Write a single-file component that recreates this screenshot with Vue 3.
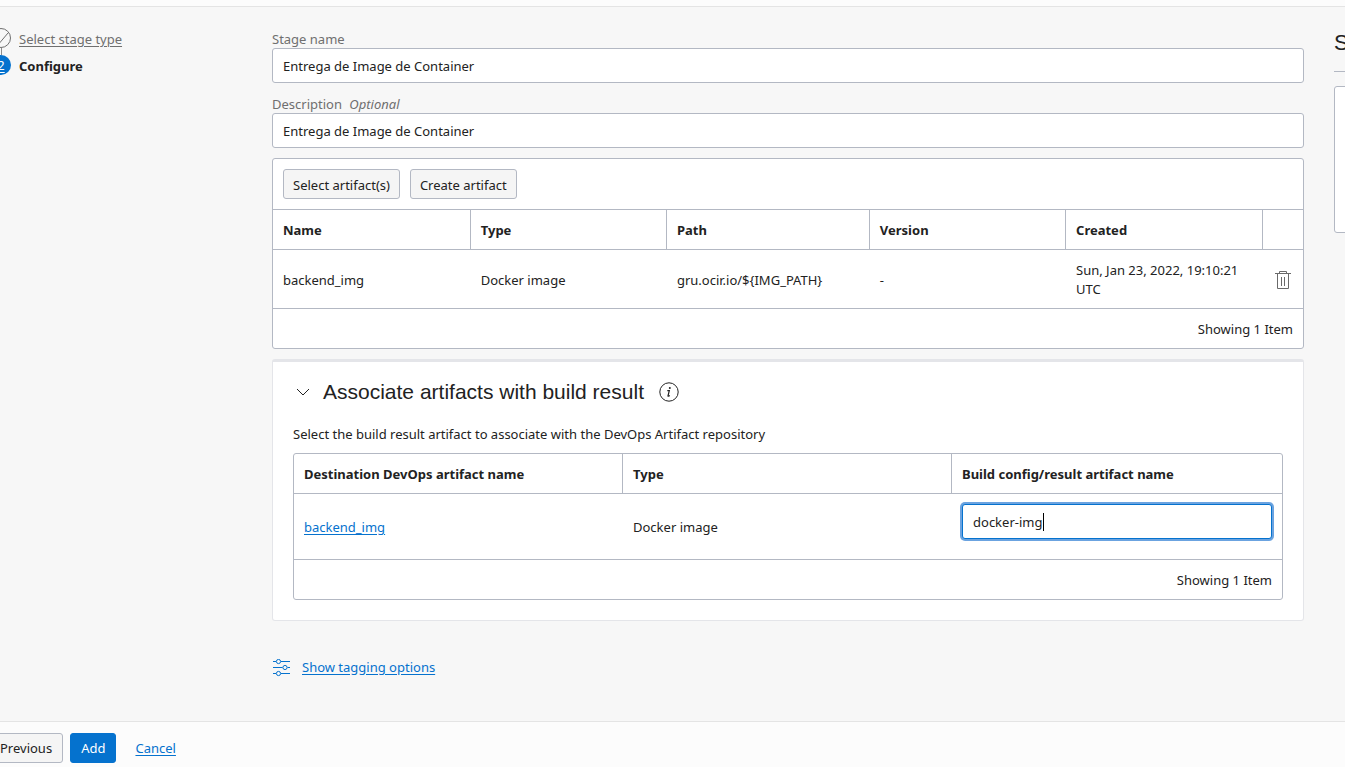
<script setup>
import { ref } from 'vue'

const stageName = ref('Entrega de Image de Container')
const description = ref('Entrega de Image de Container')
const resultName = ref('docker-img')
const artifacts = [
  {
    name: 'backend_img',
    type: 'Docker image',
    path: 'gru.ocir.io/${IMG_PATH}',
    version: '-',
    created: 'Sun, Jan 23, 2022, 19:10:21 UTC',
  },
]
</script>

<template>
  <div class="page">
    <header class="topbar"></header>
    <main class="main">
      <nav class="steps" aria-label="Steps">
        <div class="step">
          <svg class="badge" viewBox="0 0 20 20" aria-hidden="true">
            <circle cx="10" cy="10" r="9.5" fill="none" stroke="#6f6f6f" />
            <path d="M5.500 11l3.500 3.500 8-9.500" fill="none" stroke="#6f6f6f" />
          </svg>
          <a href="#" class="muted-link">Select stage type</a>
        </div>
        <div class="connector"></div>
        <div class="step current">
          <span class="badge number">2</span>
          <span class="step-label">Configure</span>
        </div>
      </nav>

      <form class="content" @submit.prevent>
        <div class="field">
          <label for="stage">Stage name</label>
          <input id="stage" v-model="stageName" type="text" class="text" />
        </div>
        <div class="field">
          <label for="desc">Description <em>Optional</em></label>
          <input id="desc" v-model="description" type="text" class="text" />
        </div>

        <section class="box">
          <div class="toolbar">
            <button type="button" class="btn">Select artifact(s)</button>
            <button type="button" class="btn">Create artifact</button>
          </div>
          <table class="grid">
            <colgroup>
              <col class="c-name" /><col class="c-type" /><col class="c-path" />
              <col class="c-type" /><col class="c-name" /><col class="c-action" />
            </colgroup>
            <thead>
              <tr>
                <th>Name</th>
                <th>Type</th>
                <th>Path</th>
                <th>Version</th>
                <th>Created</th>
                <th></th>
              </tr>
            </thead>
            <tbody>
              <tr v-for="a in artifacts" :key="a.name" class="row">
                <td>{{ a.name }}</td>
                <td>{{ a.type }}</td>
                <td>{{ a.path }}</td>
                <td>{{ a.version }}</td>
                <td>{{ a.created }}</td>
                <td>
                  <button type="button" class="icon-btn" aria-label="Delete">
                    <svg width="16" height="18" viewBox="0 0 16 18" fill="none" stroke="#6a6a6a">
                      <path d="M0 2.500H16M4.500 2.500V.5H11.500V2.500M2.500 2.500V17.500H13.500V2.500M6.500 6V15M9.500 6V15" />
                    </svg>
                  </button>
                </td>
              </tr>
            </tbody>
          </table>
          <div class="summary">Showing 1 Item</div>
        </section>

        <section class="card">
          <h2>
            <button type="button" class="icon-btn toggle" aria-label="Collapse section">
              <svg width="14" height="8" viewBox="0 0 14 8" fill="none" stroke="#222">
                <path d="M1 1l6 6 6-6" />
              </svg>
            </button>
            <span>Associate artifacts with build result</span>
            <svg class="info" width="20" height="20" viewBox="0 0 20 20" aria-hidden="true">
              <circle cx="10" cy="10" r="9.200" fill="none" stroke="#222" />
              <circle cx="10.800" cy="5.900" r="1" fill="#222" />
              <path d="M8.300 8.700h2l-1.300 5.200q0 .8 1.800-.5" fill="none" stroke="#222" stroke-width="1.200" />
            </svg>
          </h2>
          <p>Select the build result artifact to associate with the DevOps Artifact repository</p>
          <div class="box">
            <table class="grid thirds">
              <colgroup>
                <col class="c-dest" /><col class="c-kind" /><col />
              </colgroup>
              <thead>
                <tr>
                  <th>Destination DevOps artifact name</th>
                  <th>Type</th>
                  <th id="result-head">Build config/result artifact name</th>
                </tr>
              </thead>
              <tbody>
                <tr>
                  <td><a href="#">backend_img</a></td>
                  <td>Docker image</td>
                  <td class="edit">
                    <div class="focused">
                      <input v-model="resultName" type="text" class="text" aria-labelledby="result-head" />
                      <i class="caret"></i>
                    </div>
                  </td>
                </tr>
              </tbody>
            </table>
            <div class="summary">Showing 1 Item</div>
          </div>
        </section>

        <div class="tagging">
          <svg width="18" height="18" viewBox="0 0 18 18" fill="none" stroke="#0572ce">
            <path d="M0 2.500H3M8 2.500H17M0 8.500H9.500M14.500 8.500H17M0 14.500H3M8 14.500H17" />
            <circle cx="5.500" cy="2.500" r="2.100" />
            <circle cx="12" cy="8.500" r="2.100" />
            <circle cx="5.500" cy="14.500" r="2.100" />
          </svg>
          <a href="#">Show tagging options</a>
        </div>
      </form>

      <aside class="side">
        <h2>S</h2>
        <div class="side-box"></div>
      </aside>
    </main>
    <footer class="actions">
      <button type="button" class="btn">Previous</button>
      <button type="button" class="btn primary">Add</button>
      <a href="#" class="cancel">Cancel</a>
    </footer>
  </div>
</template>

<style>
body {
  margin: 0;
}
</style>

<style scoped>
.page,
.page * {
  box-sizing: border-box;
}
.page {
  display: flex;
  flex-direction: column;
  height: 100vh;
  overflow: hidden;
  background: #f7f7f7;
  color: #222;
  font: 13px/19px "Noto Sans", "Open Sans", sans-serif;
}
.topbar {
  flex: none;
  height: 7px;
  background: #fcfcfc;
  border-bottom: 1px solid #e4e4e4;
}
.main {
  flex: 1;
  min-height: 0;
  display: grid;
  grid-template-columns: 242px minmax(0, 1fr) 11px;
  column-gap: 30px;
  padding-top: 21px;
}
a {
  color: #0572ce;
  text-decoration: underline;
  text-underline-offset: 2px;
}
.steps {
  margin-left: -9px;
}
.step {
  display: flex;
  align-items: center;
  gap: 8px;
  height: 20px;
}
.badge {
  flex: none;
  width: 20px;
  height: 20px;
}
.number {
  border-radius: 50%;
  background: #0572ce;
  color: #fff;
  font-weight: 400;
  line-height: 20px;
  text-align: center;
  text-decoration: underline;
  text-underline-offset: 2px;
}
.connector {
  width: 11px;
  height: 7px;
  border-right: 1px solid #8c8c8c;
}
.step-label,
.muted-link {
  padding-top: 2px;
}
.current {
  font-weight: 700;
}
.muted-link {
  color: #6f6f6f;
}
.field {
  margin-bottom: 10px;
}
.field label {
  display: block;
  height: 20px;
  line-height: 22px;
  color: #6f6f6f;
}
.field em {
  margin-left: 4px;
}
.text {
  display: block;
  width: 100%;
  height: 35px;
  padding: 0 10px;
  border: 1px solid #b3b8c3;
  border-radius: 3px;
  background: #fff;
  color: #222;
  font: inherit;
  outline: none;
}
.box {
  border: 1px solid #b3b8c3;
  border-radius: 3px;
  background: #fff;
}
.toolbar {
  display: flex;
  gap: 10px;
  padding: 10px;
}
.btn {
  flex: none;
  height: 30px;
  padding: 0 10px;
  border: 1px solid #b3b8c3;
  border-radius: 3px;
  background: #f5f5f5;
  color: #222;
  font: inherit;
  white-space: nowrap;
}
.toolbar .btn {
  padding: 2px 9px 0;
}
.grid {
  width: 100%;
  table-layout: fixed;
  border-collapse: separate;
  border-spacing: 0;
}
.c-name {
  width: 19.1%;
}
.c-type {
  width: 19.05%;
}
.c-path {
  width: 19.7%;
}
.c-action {
  width: 41px;
}
.c-dest {
  width: 33.2%;
}
.c-kind {
  width: 33.3%;
}
th,
td {
  padding: 2px 10px 0;
  border-top: 1px solid #b3b8c3;
  text-align: left;
  vertical-align: middle;
}
th {
  height: 40px;
  font-weight: 700;
  white-space: nowrap;
}
th + th {
  border-left: 1px solid #b3b8c3;
}
td + td {
  padding-left: 11px;
}
.thirds th {
  height: 39px;
  border-top: 0;
}
.row td {
  height: 59px;
}
.icon-btn {
  display: block;
  padding: 0;
  border: 0;
  background: none;
  line-height: 0;
}
td .icon-btn {
  margin: 0 auto;
}
.summary {
  padding: 11px 10px 9px;
  border-top: 1px solid #b3b8c3;
  text-align: right;
}
.card {
  margin-top: 10px;
  padding: 0 20px 20px;
  border: 1px solid #e4e5e9;
  border-top-width: 3px;
  border-radius: 3px;
  background: #fff;
}
h2 {
  margin: 0;
  font: 400 21px/30px "Liberation Sans", Arial, sans-serif;
}
.card h2 {
  display: flex;
  align-items: center;
  gap: 10px;
  height: 60px;
}
.info {
  margin-left: 5px;
}
.toggle {
  width: 20px;
  padding: 0 3px;
}
.card p {
  margin: 0 0 7px;
  line-height: 24px;
}
td.edit {
  padding: 10px 10px 20px 11px;
}
.focused {
  position: relative;
}
.focused .text {
  border-color: #0572ce;
  box-shadow: 0 0 0 2px #6ba3e0;
}
.caret {
  position: absolute;
  top: 9px;
  left: 81px;
  width: 1px;
  height: 18px;
  background: #000;
}
.tagging {
  display: flex;
  align-items: center;
  gap: 11px;
  margin: 37px 0 0 1px;
}
.side {
  overflow: hidden;
}
.side h2 {
  height: 44px;
  border-bottom: 1px solid #b3b8c3;
  font-size: 22px;
}
.side-box {
  width: 200px;
  height: 147px;
  margin-top: 14px;
  border: 1px solid #b3b8c3;
  border-radius: 3px;
  background: #fff;
}
.actions {
  flex: none;
  display: flex;
  align-items: center;
  gap: 7px;
  padding: 11px 0 4px;
  border-top: 1px solid #e4e4e4;
  background: #fcfcfc;
}
.actions .btn:first-child {
  margin-left: -11px;
}
.actions .primary {
  border-color: #0572ce;
  background: #0572ce;
  color: #fff;
}
.cancel {
  margin-left: 12px;
}
</style>
